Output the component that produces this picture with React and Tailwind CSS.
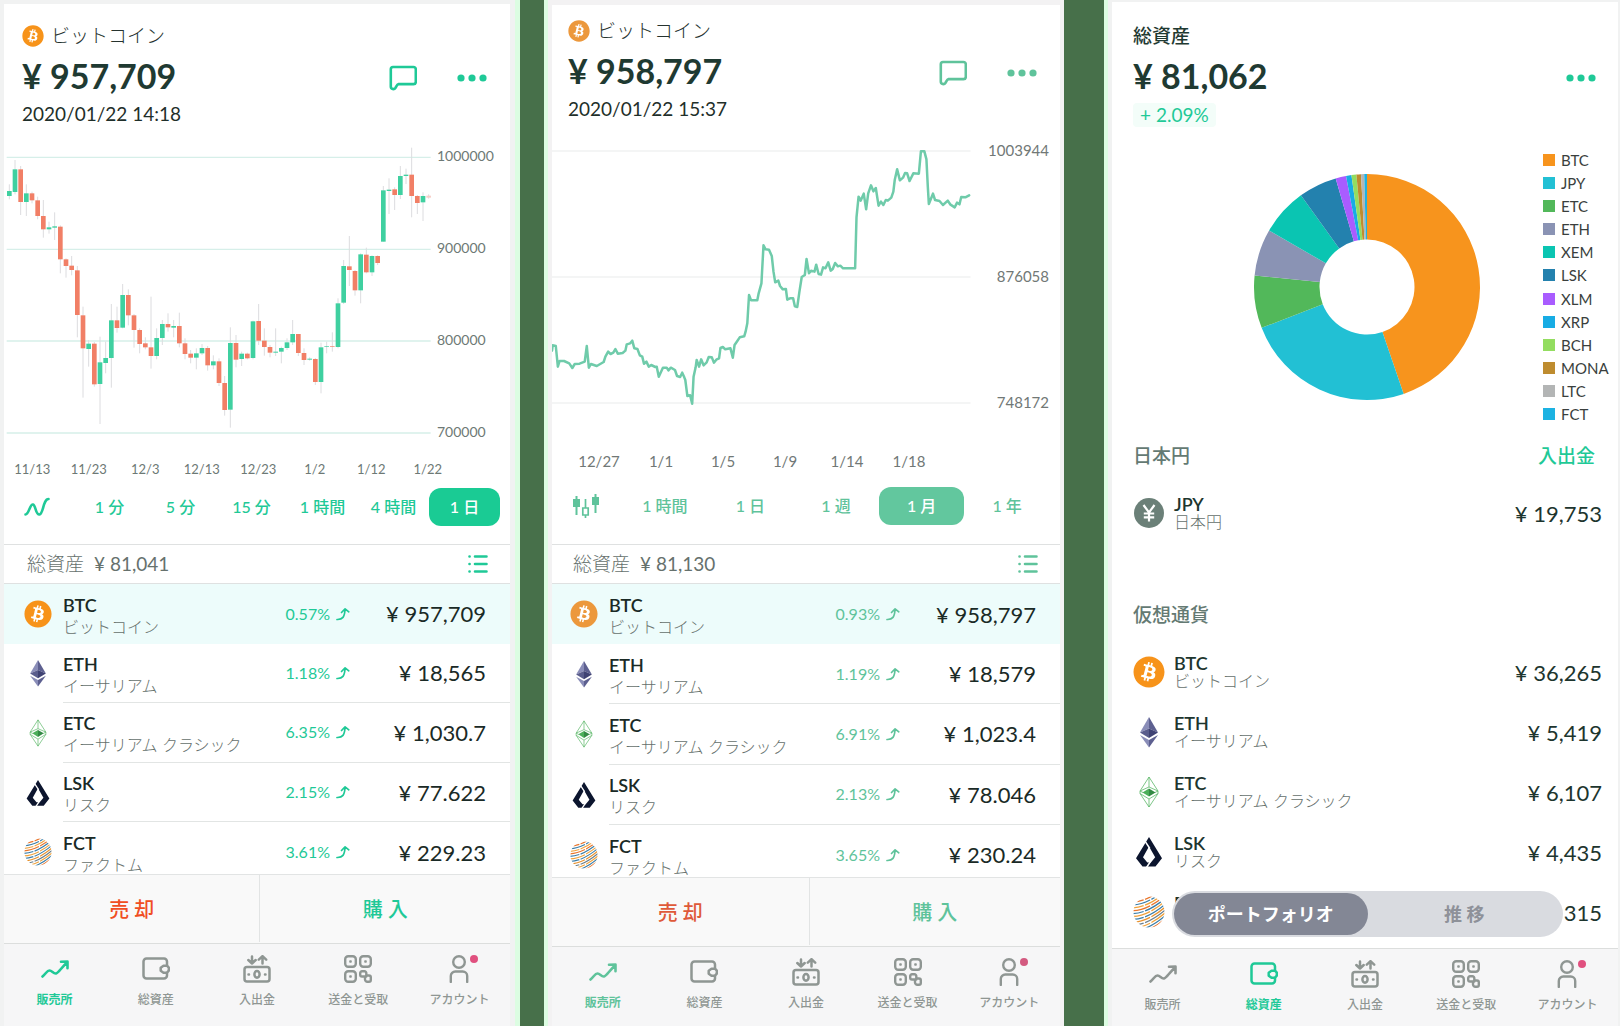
import React from "react";
import { FaBitcoin } from "react-icons/fa";

/* ---------- themes ---------- */

const vivid = {
  text: "text-[#1fc997]",
  fill: "bg-[#1acb94]",
  coin: "text-[#f7931a]",
  sell: "text-[#f04e23]",
  badge: "bg-[#e0507f]",
};
const soft = {
  text: "text-[#5fc39b]",
  fill: "bg-[#62c79e]",
  coin: "text-[#ec983c]",
  sell: "text-[#df5a3a]",
  badge: "bg-[#d35a80]",
};

/* ---------- coin icons ---------- */

function BtcIcon({ theme }) {
  return (
    <span className={"block size-full rounded-full bg-white bg-clip-content p-[2px] " + theme.coin}>
      <FaBitcoin className="-m-[2px] block h-[calc(100%+4px)] w-[calc(100%+4px)]" />
    </span>
  );
}

function EthIcon() {
  return (
    <svg viewBox="0 0 32 32" className="block size-full">
      <path d="M16 1 7 16.600 16 12.500z" fill="#8a8db8" />
      <path d="M16 1v11.500l9 4.100z" fill="#5d6090" />
      <path d="M7 16.600 16 12.500v9.500z" fill="#5a5d8c" />
      <path d="M25 16.600 16 12.500v9.500z" fill="#3f4273" />
      <path d="M7 19l9 5v7.500z" fill="#8a8db8" />
      <path d="M25 19l-9 5v7.500z" fill="#5d6090" />
    </svg>
  );
}

function EtcIcon() {
  return (
    <svg viewBox="0 0 32 32" className="block size-full" fill="none" stroke="#5cb868" strokeWidth=".8" strokeLinejoin="round">
      <path d="M16 1 7 15 16 11l9 4z" />
      <path d="M7 15v2.500L16 31l9-13.500V15" />
      <path d="M16 1v10M7 17.500 16 23l9-5.500M16 23v8M7 15l3 1.500M25 15l-3 1.500" />
      <path d="M16 12.500 9.500 16.400 16 20.500z" fill="#4caf5a" stroke="none" />
      <path d="M16 12.500l6.500 3.900L16 20.500z" fill="#338a44" stroke="none" />
    </svg>
  );
}

function LskIcon() {
  return (
    <svg viewBox="0 0 32 32" className="block size-full">
      <path fill="#0c152e" fillRule="evenodd" d="M16 1l13 21.200-6.500 8.300h-13L3 22.200zM16 10.500l-6 10.800 4.300 5.200h3.600l4.300-5.200z" />
      <path d="M16.800 12.500 12.500 5.800M17.500 25.500l-4 6" stroke="#fff" strokeWidth="1.500" />
    </svg>
  );
}

function FctIcon({ id }) {
  const colors = ["#e8762d", "#3b7ea8", "#f0a23c", "#e8762d", "#3b7ea8", "#f0a23c", "#3b7ea8", "#e8912d", "#6a7f8c", "#f0a23c", "#3b7ea8", "#e8762d"];
  return (
    <svg viewBox="0 0 32 32" className="block size-full">
      <clipPath id={id}>
        <circle cx="16" cy="16" r="15.500" />
      </clipPath>
      <g clipPath={"url(#" + id + ")"} fill="none" strokeWidth="1.300">
        {colors.map((c, i) => (
          <path key={i} stroke={c} strokeDasharray={i % 2 ? "19 1.500 30" : "12 1.500 40"} d={`M-1 ${6 + i * 2.9}C9 ${6 + i * 2.9} 20 ${1 + i * 2.9} 32 ${-9 + i * 2.9}`} />
        ))}
      </g>
    </svg>
  );
}

function JpyIcon() {
  return (
    <svg viewBox="0 0 32 32" className="block size-full">
      <circle cx="16" cy="16" r="15" fill="#6b8078" />
      <path d="M10.500 8 16 15.500 21.500 8M16 15.500V24.500M10.800 16.500h10.400M10.800 20.300h10.400" fill="none" stroke="#fff" strokeWidth="2.200" />
    </svg>
  );
}

function CoinIcon({ code, theme, id }) {
  if (code === "BTC") return <BtcIcon theme={theme} />;
  if (code === "ETH") return <EthIcon />;
  if (code === "ETC") return <EtcIcon />;
  if (code === "LSK") return <LskIcon />;
  if (code === "JPY") return <JpyIcon />;
  return <FctIcon id={id} />;
}

/* ---------- interface icons ---------- */

const stroke = { fill: "none", stroke: "currentColor", strokeLinecap: "round", strokeLinejoin: "round" };

function CommentIcon() {
  return (
    <svg viewBox="0 0 28 26" className="h-[26px] w-7" strokeWidth="2.600" {...stroke}>
      <path d="M4 2h20.500a2.300 2.300 0 0 1 2.300 2.300v12.500a2.300 2.300 0 0 1-2.300 2.300H9.500c-1.600.200-2 2-2.900 3.600-1.400 2.200-4.800 1.700-4.800-1.200V4.300A2.300 2.300 0 0 1 4 2z" />
    </svg>
  );
}

function DotsIcon() {
  return (
    <svg viewBox="0 0 30 8" className="h-2 w-[30px]" fill="currentColor">
      <circle cx="4" cy="4" r="3.600" />
      <circle cx="15" cy="4" r="3.600" />
      <circle cx="26" cy="4" r="3.600" />
    </svg>
  );
}

function ListIcon() {
  return (
    <svg viewBox="0 0 20 20" className="size-5" strokeWidth="2.600" {...stroke}>
      <path d="M7 2.500h11.500M7 10h11.500M7 17.500h11.500M1.500 2.500h.1M1.500 10h.1M1.500 17.500h.1" />
    </svg>
  );
}

function WaveIcon() {
  return (
    <svg viewBox="0 0 26 20" className="h-5 w-[26px]" strokeWidth="2.600" {...stroke}>
      <path d="M1.500 17.500C5 17.500 6 6.500 9 7.500s2.500 10.500 6.500 10S19 2 24.500 2" />
    </svg>
  );
}

function CandleIcon() {
  return (
    <svg viewBox="0 0 28 26" className="h-[26px] w-7" fill="currentColor">
      <path d="M1 6h2.500V3h2v3H8v8H5.500v8h-2v-8H1zM20 4h2.500V1h2v3H27v8h-2.500v8h-2v-8H20z" />
      <path d="M13.500 6v9M13.500 22v3M10.800 15h5.400v7h-5.400z" fill="none" stroke="currentColor" strokeWidth="1.700" />
    </svg>
  );
}

function UpArrow() {
  return (
    <svg viewBox="0 0 14 14" className="h-[14px] w-[14px]" strokeWidth="1.700" {...stroke}>
      <path d="M1 12.500c5.500.3 7.800-2.500 8-10.500M5.500 5.500 9.100 1.800 12.800 4.800" />
    </svg>
  );
}

function MarketIcon() {
  return (
    <svg viewBox="0 0 28 28" className="size-7" strokeWidth="2.600" {...stroke}>
      <path d="M1.500 21.500C5 18.500 6 15.500 8.500 15.500s4 3.600 6.500 3S20 13 26 7.500M20 6.700l6.500-.2v6.800" />
    </svg>
  );
}

function WalletIcon() {
  return (
    <svg viewBox="0 0 28 28" className="size-7" strokeWidth="2.500" {...stroke}>
      <path d="M24.500 10V6.500a3 3 0 0 0-3-3H4a3 3 0 0 0-3 3v14a3 3 0 0 0 3 3h17.500a3 3 0 0 0 3-3V18" transform="translate(.5 0)" />
      <path d="M21.500 10.700H25l1.800 2v3l-1.800 2h-3.500l-2.800-2v-3z" />
    </svg>
  );
}

function CashIcon() {
  return (
    <svg viewBox="0 0 28 28" className="size-7" strokeWidth="2.500" {...stroke}>
      <rect x="1.500" y="12" width="25" height="14.500" rx="2.500" />
      <ellipse cx="14" cy="19.300" rx="2.600" ry="3.400" />
      <path d="M5.500 19.500h.5M22 19.500h.5M9 1.500v7M5.300 5 9 8.500 12.700 5M19.500 8.500v-7M15.800 4.700l3.700-3.500 3.700 3.500" />
    </svg>
  );
}

function QrIcon() {
  return (
    <svg viewBox="0 0 28 28" className="size-7" strokeWidth="2.400" {...stroke}>
      <rect x="1.200" y="1.200" width="10.600" height="10.600" rx="3" />
      <rect x="16.200" y="1.200" width="10.600" height="10.600" rx="3" />
      <rect x="1.200" y="16.200" width="10.600" height="10.600" rx="3" />
      <path d="M18 16.200h2.500a1.800 1.800 0 0 1 1.800 1.800v3.500H18a1.800 1.800 0 0 1-1.800-1.800V18a1.800 1.800 0 0 1 1.800-1.800zM22.300 20.500H25a1.800 1.800 0 0 1 1.800 1.800V25a1.800 1.800 0 0 1-1.800 1.800h-1.500A2.500 2.500 0 0 1 21 24v-2.500" />
      <path d="M6 6h1v1H6zM21 6h1v1h-1zM6 21h1v1H6z" fill="currentColor" strokeWidth="1.600" />
    </svg>
  );
}

function UserIcon() {
  return (
    <svg viewBox="0 0 28 28" className="size-7" strokeWidth="2.400" {...stroke}>
      <circle cx="14" cy="7" r="5.800" />
      <path d="M5.800 27v-6a4.500 4.500 0 0 1 4.500-4.500h7.400a4.500 4.500 0 0 1 4.500 4.500v6" />
    </svg>
  );
}

/* ---------- shared pieces ---------- */

const NAV = [
  ["販売所", MarketIcon],
  ["総資産", WalletIcon],
  ["入出金", CashIcon],
  ["送金と受取", QrIcon],
  ["アカウント", UserIcon],
];

function BottomNav({ active, theme, height }) {
  return (
    <nav className={"grid shrink-0 grid-cols-5 border-t border-[#dcdedd] bg-[#f6f6f7] " + height}>
      {NAV.map(([label, Icon], i) => (
        <a key={label} href="#" className={"flex flex-col items-center gap-[9px] pt-[11px] " + (i === active ? theme.text : "text-[#8f9693]")}>
          <span className="relative">
            <Icon />
            {i === 4 && <span className={"absolute -right-[5px] top-0 size-2 rounded-full " + theme.badge} />}
          </span>
          <span className={"whitespace-nowrap text-xs leading-4 " + (i === active ? "font-bold" : "font-medium")}>{label}</span>
        </a>
      ))}
    </nav>
  );
}

function PriceLine({ price, theme, comment, pad }) {
  return (
    <div className={"mt-1 flex h-11 items-center justify-between " + pad}>
      <div className="text-[34px] font-bold leading-[44px] text-[#1f3a32]">{price}</div>
      <div className={"flex items-center gap-10 pt-[3px] " + theme.text}>
        {comment && (
          <button aria-label="コメント">
            <CommentIcon />
          </button>
        )}
        <button aria-label="メニュー">
          <DotsIcon />
        </button>
      </div>
    </div>
  );
}

function Periods({ items, active, theme, icon, margin }) {
  return (
    <div className={"flex h-[38px] items-stretch pr-[10px] " + margin}>
      <button aria-label="チャート切替" className={"w-[70px] shrink-0 pl-5 " + theme.text}>
        {icon}
      </button>
      {items.map((label) => (
        <button
          key={label}
          className={"flex-1 whitespace-nowrap rounded-xl text-base font-medium " + (label === active ? "text-white " + theme.fill : theme.text)}
        >
          {label}
        </button>
      ))}
    </div>
  );
}

function TotalBar({ value, theme, margin }) {
  return (
    <div className={"flex h-10 shrink-0 items-center justify-between border-y border-[#dfe1e1] pr-[22px] " + margin}>
      <div className="flex gap-[10px] text-[19px] text-[#66716d]">
        <span className="font-light">総資産</span>
        <span>{value}</span>
      </div>
      <button aria-label="一覧" className={theme.text}>
        <ListIcon />
      </button>
    </div>
  );
}

function CoinList({ rows, theme, height, pad, id }) {
  return (
    <div className="min-h-0 flex-1 overflow-hidden">
      <ul className={"grid grid-rows-5 " + height}>
        {rows.map(([code, name, pct, price], i) => (
          <li key={code} className={"flex min-h-0 " + pad + (i === 0 ? " bg-[#edfcfb]" : "")}>
            <button className="flex w-full items-stretch gap-[11px] text-left">
              <span className="size-7 shrink-0 self-center">
                <CoinIcon code={code} theme={theme} id={id + "-sphere"} />
              </span>
              <span className={"flex flex-1 items-center pr-6 " + (i > 0 && i < 4 ? "border-b border-[#e2e5e4]" : "")}>
                <span className="flex-1 whitespace-nowrap pt-1">
                  <span className="block text-lg font-semibold leading-[22px] text-[#1a2a26]">{code}</span>
                  <span className="block text-base font-light leading-[22px] text-[#65706c]">{name}</span>
                </span>
                <span className={"flex items-center gap-1.5 text-base " + theme.text}>
                  {pct}
                  <UpArrow />
                </span>
                <span className="w-[136px] text-right text-[22px] text-[#1a2a26]">{price}</span>
              </span>
            </button>
          </li>
        ))}
      </ul>
    </div>
  );
}

function TradeBar({ theme }) {
  return (
    <div className="grid h-[69px] shrink-0 grid-cols-[257fr_250fr] border-t border-[#e2e4e4] bg-[#f9f9f9] pb-px text-xl font-medium">
      <button className={"border-r border-[#e2e4e4] " + theme.sell}>売 却</button>
      <button className={theme.text}>購 入</button>
    </div>
  );
}

function CoinHeader({ theme, price, time, pad }) {
  return (
    <header className={"pr-[19px] " + pad}>
      <h1 className="flex h-7 items-center gap-[7px] text-[19px] font-light text-[#26332f]">
        <span className="size-[22px]">
          <BtcIcon theme={theme} />
        </span>
        ビットコイン
      </h1>
      <PriceLine price={price} theme={theme} comment pad="pr-1" />
      <div className="mt-1 text-[19px] leading-6 text-[#1f2f2a]">{time}</div>
    </header>
  );
}

/* ---------- charts ---------- */

/* direction, body top, body bottom, wick top, wick bottom */
const CANDLES = [
  ["u", 183, 198, 163, 208], ["u", 118, 186, 90, 193], ["d", 118, 216, 108, 255], ["u", 190, 216, 163, 258],
  ["d", 190, 211, 185, 220], ["d", 211, 258, 200, 268], ["d", 258, 298, 210, 323], ["u", 292, 298, 275, 311],
  ["u", 289, 293, 247, 330], ["d", 290, 388, 286, 430], ["d", 388, 408, 385, 443], ["d", 407, 420, 378, 436],
  ["d", 421, 555, 408, 622], ["d", 556, 655, 530, 803], ["u", 641, 657, 630, 710], ["d", 641, 763, 636, 770],
  ["u", 697, 762, 620, 882], ["u", 684, 699, 635, 730], ["u", 571, 684, 522, 773], ["d", 571, 594, 530, 608],
  ["u", 495, 593, 462, 595], ["d", 495, 556, 478, 586], ["d", 556, 600, 552, 653], ["d", 600, 642, 595, 670],
  ["d", 640, 652, 622, 658], ["d", 652, 678, 500, 716], ["u", 624, 678, 595, 688], ["u", 582, 624, 570, 645],
  ["d", 582, 592, 550, 605], ["u", 588, 593, 570, 622], ["d", 588, 640, 548, 652], ["d", 640, 672, 625, 688],
  ["d", 671, 683, 660, 700], ["u", 670, 683, 655, 718], ["u", 654, 670, 642, 675], ["d", 654, 706, 648, 722],
  ["u", 694, 706, 676, 718], ["d", 694, 759, 685, 768], ["d", 759, 840, 738, 857], ["u", 639, 839, 592, 893],
  ["d", 639, 689, 615, 712], ["u", 671, 687, 665, 708], ["d", 671, 685, 668, 688], ["u", 574, 684, 572, 688],
  ["d", 573, 632, 522, 645], ["d", 632, 651, 595, 677], ["d", 651, 668, 645, 682], ["u", 665, 668, 595, 678],
  ["u", 654, 665, 650, 700], ["u", 637, 654, 625, 660], ["u", 612, 637, 570, 645], ["d", 612, 669, 612, 678],
  ["d", 669, 690, 655, 705], ["u", 686, 689, 682, 692], ["d", 687, 756, 684, 765], ["u", 652, 756, 638, 790],
  ["u", 649, 651, 635, 670], ["d", 649, 651, 607, 665], ["u", 520, 651, 505, 655], ["u", 408, 518, 390, 522],
  ["d", 409, 420, 318, 468], ["d", 423, 481, 420, 497], ["u", 373, 481, 370, 520], ["d", 374, 427, 353, 430],
  ["u", 378, 427, 376, 438], ["d", 378, 399, 376, 405], ["u", 181, 335, 168, 335], ["u", 179, 183, 145, 252],
  ["d", 178, 195, 172, 240], ["u", 138, 195, 108, 207], ["u", 134, 138, 116, 162], ["d", 134, 198, 53, 262],
  ["d", 198, 219, 195, 252], ["u", 198, 217, 187, 273], ["f", 197, 203, 193, 206],
];
const CANDLE_FILL = { u: "#3fd0a0", d: "#f17f66", f: "#f7cfc8" };

function CandleChart() {
  return (
    <div className="mt-[14px] flex">
      <svg viewBox="12 30 1284 912" preserveAspectRatio="none" className="h-[304px] min-w-0 flex-1">
        {[82, 358, 633, 909].map((y) => (
          <path key={y} d={`M20 ${y}H1292`} stroke="#d6efe9" strokeWidth="4" />
        ))}
        {CANDLES.map(([dir, top, bottom, hi, lo], i) => (
          <g key={i}>
            <path d={`M${28 + 17 * i} ${hi}V${lo}`} stroke="#dcdcdf" strokeWidth="3" />
            <rect x={21 + 17 * i} y={top} width="14" height={bottom - top} fill={CANDLE_FILL[dir]} />
          </g>
        ))}
      </svg>
      <div className="flex w-[78px] shrink-0 flex-col gap-[72px] pl-[5px] pt-[6px] text-sm leading-5 text-[#6d7975]">
        <span>1000000</span>
        <span>900000</span>
        <span>800000</span>
        <span>700000</span>
      </div>
    </div>
  );
}

const LINE_POINTS =
  "35,662 37,646 46,648 52,710 57,693 70,693 85,700 94,714 101,702 115,701 130,695 136,648 142,713 148,702 165,708 185,696 190,680 198,665 205,672 213,668 219,657 226,671 240,669 248,662 252,643 262,640 268,632 274,655 283,657 290,676 297,680 302,701 309,695 316,710 323,705 335,711 339,710 345,740 357,713 368,713 373,721 380,713 392,720 398,738 407,741 413,728 419,742 422,750 428,798 436,796 442,821 446,740 452,712 455,690 462,710 468,688 475,706 484,697 490,681 499,682 505,698 512,689 520,685 524,654 531,651 538,658 553,655 560,683 565,645 573,633 580,622 593,619 597,605 602,580 607,495 613,511 631,511 635,490 643,460 649,346 655,358 665,359 673,378 678,425 683,457 692,452 697,468 705,478 714,477 718,509 726,505 735,505 740,529 747,531 753,487 760,441 769,435 774,387 781,430 787,422 797,425 802,404 809,432 816,434 822,412 829,415 837,397 844,422 850,417 857,399 865,409 872,407 880,415 915,415 919,262 925,200 931,212 940,191 947,238 953,190 961,166 968,184 975,174 983,227 990,215 997,225 1004,210 1010,212 1020,203 1026,185 1030,150 1037,118 1045,151 1054,143 1060,129 1066,130 1073,153 1084,130 1100,131 1106,64 1116,64 1122,88 1126,170 1129,222 1141,191 1147,210 1160,213 1170,225 1184,212 1192,224 1204,232 1211,218 1218,223 1223,201 1235,202 1246,196";

function LineChart() {
  return (
    <div className="mt-[19px] flex">
      <svg viewBox="35 30 1228 840" preserveAspectRatio="none" className="h-[280px] min-w-0 flex-1">
        {[63, 441, 819].map((y) => (
          <path key={y} d={`M35 ${y}H1250`} stroke="#f1f2f2" strokeWidth="4" />
        ))}
        <polyline points={LINE_POINTS} fill="none" stroke="#6fcbaa" strokeWidth="2.500" strokeLinejoin="round" strokeLinecap="round" vectorEffect="non-scaling-stroke" />
      </svg>
      <div className="flex w-[85px] shrink-0 flex-col gap-[106px] pr-[11px] text-right text-[15px] leading-5 text-[#717876]">
        <span>1003944</span>
        <span>876058</span>
        <span>748172</span>
      </div>
    </div>
  );
}

const HOLDINGS = [
  ["BTC", 44.74, "#f7941d"],
  ["JPY", 24.37, "#22c0d4"],
  ["ETC", 7.53, "#52b85a"],
  ["ETH", 6.68, "#8a93b4"],
  ["XEM", 6.74, "#0ac5b2"],
  ["LSK", 5.47, "#2381ae"],
  ["XLM", 1.5, "#a95cff"],
  ["XRP", 0.77, "#17ace4"],
  ["BCH", 0.7, "#93dd60"],
  ["MONA", 0.65, "#be8c2f"],
  ["LTC", 0.46, "#b3b5b5"],
  ["FCT", 0.39, "#1cb2e2"],
];

function Donut() {
  const total = HOLDINGS.reduce((sum, h) => sum + h[1], 0);
  let acc = 0;
  const point = (share, r) => {
    const a = (share / total) * 2 * Math.PI;
    return `${Math.sin(a) * r} ${-Math.cos(a) * r}`;
  };
  return (
    <svg viewBox="-114 -114 228 228" className="size-[228px]" role="img" aria-label="ポートフォリオ">
      {HOLDINGS.map(([code, share, color]) => {
        const from = acc;
        acc += share;
        return <path key={code} fill={color} d={`M${point(from, 113)}A113 113 0 0 1 ${point(acc, 113)}L${point(acc, 47.5)}A47.5 47.5 0 0 0 ${point(from, 47.5)}Z`} />;
      })}
    </svg>
  );
}

/* ---------- screens ---------- */

function CandleScreen() {
  return (
    <section className="flex min-h-0 min-w-0 flex-col border-r-[5px] border-[#dcfde2]">
      <div className="flex min-h-0 flex-1 flex-col border-l-4 border-r-[5px] border-t-4 border-[#f1f2f2] bg-white">
        <CoinHeader theme={vivid} price="¥ 957,709" time="2020/01/22 14:18" pad="pl-[18px] pt-[18px]" />
        <CandleChart />
        <div className="mr-[54px] mt-[15px] grid grid-cols-8 text-center text-[13px] leading-5 text-[#6d7975]">
          {["11/13", "11/23", "12/3", "12/13", "12/23", "1/2", "1/12", "1/22"].map((d) => (
            <span key={d}>{d}</span>
          ))}
        </div>
        <Periods items={["1 分", "5 分", "15 分", "1 時間", "4 時間", "1 日"]} active="1 日" theme={vivid} icon={<WaveIcon />} margin="mt-[9px]" />
        <TotalBar value="¥ 81,041" theme={vivid} margin="mt-[18px] pl-[23px]" />
        <CoinList
          id="candle"
          theme={vivid}
          height="h-[298px]"
          pad="pl-5"
          rows={[
            ["BTC", "ビットコイン", "0.57%", "¥ 957,709"],
            ["ETH", "イーサリアム", "1.18%", "¥ 18,565"],
            ["ETC", "イーサリアム クラシック", "6.35%", "¥ 1,030.7"],
            ["LSK", "リスク", "2.15%", "¥ 77.622"],
            ["FCT", "ファクトム", "3.61%", "¥ 229.23"],
          ]}
        />
        <TradeBar theme={vivid} />
        <BottomNav active={0} theme={vivid} height="h-[83px]" />
      </div>
    </section>
  );
}

function LineScreen() {
  return (
    <section className="flex min-h-0 min-w-0 flex-col border-l-4 border-[#dcfde2]">
      <div className="flex min-h-0 flex-1 flex-col border-x-4 border-t-[5px] border-[#f3f2f3] bg-white">
        <CoinHeader theme={soft} price="¥ 958,797" time="2020/01/22 15:37" pad="pl-4 pt-3" />
        <LineChart />
        <div className="ml-4 mr-[120px] mt-[31px] grid grid-cols-6 text-center text-[15px] leading-5 text-[#717876]">
          {["12/27", "1/1", "1/5", "1/9", "1/14", "1/18"].map((d) => (
            <span key={d}>{d}</span>
          ))}
        </div>
        <Periods items={["1 時間", "1 日", "1 週", "1 月", "1 年"]} active="1 月" theme={soft} icon={<CandleIcon />} margin="mt-4" />
        <TotalBar value="¥ 81,130" theme={soft} margin="mt-[19px] pl-[21px]" />
        <CoinList
          id="line"
          theme={soft}
          height="h-[301px]"
          pad="pl-[18px]"
          rows={[
            ["BTC", "ビットコイン", "0.93%", "¥ 958,797"],
            ["ETH", "イーサリアム", "1.19%", "¥ 18,579"],
            ["ETC", "イーサリアム クラシック", "6.91%", "¥ 1,023.4"],
            ["LSK", "リスク", "2.13%", "¥ 78.046"],
            ["FCT", "ファクトム", "3.65%", "¥ 230.24"],
          ]}
        />
        <TradeBar theme={soft} />
        <BottomNav active={0} theme={soft} height="h-[80px]" />
      </div>
    </section>
  );
}

function AssetRow({ code, name, price }) {
  return (
    <li className="flex h-[60px] items-center gap-[9px] pl-[21px] pr-4">
      <span className="size-8 shrink-0">
        <CoinIcon code={code} theme={vivid} id="asset-sphere" />
      </span>
      <span className="flex-1">
        <span className="block text-lg font-semibold leading-[18px] text-[#1d352e]">{code}</span>
        <span className="block text-base font-light leading-[18px] text-[#65706c]">{name}</span>
      </span>
      <span className="text-[22px] text-[#1d352e]">{price}</span>
    </li>
  );
}

function AssetScreen() {
  return (
    <section className="flex min-h-0 min-w-0 flex-col border-l-4 border-[#dcfde2]">
      <div className="flex min-h-0 flex-1 flex-col border-l-4 border-r-2 border-t-2 border-[#f1f2f2] bg-white">
        <div className="relative min-h-0 flex-1 overflow-hidden">
          <header className="pl-[21px] pt-5">
            <h1 className="flex h-7 items-center text-[19px] font-medium text-[#1f3a32]">総資産</h1>
            <PriceLine price="¥ 81,062" theme={vivid} pad="pr-[22px]" />
            <div className={"mt-[5px] w-fit rounded-sm bg-[#f3fdf9] px-[7px] text-[19px] leading-6 " + vivid.text}>+ 2.09%</div>
          </header>
          <div className="mt-[21px] grid grid-cols-[1fr_auto_1fr] items-center pl-[3px]">
            <span />
            <Donut />
            <ul className="mr-[9px] grid h-[278px] w-[66px] grid-rows-12 justify-self-end">
              {HOLDINGS.map(([code, , color]) => (
                <li key={code} className="flex min-h-0 items-center gap-[6px] text-[15px] leading-5 text-[#3a3f3d]">
                  <svg viewBox="0 0 12 12" className="size-3 shrink-0">
                    <rect width="12" height="12" fill={color} />
                  </svg>
                  {code}
                </li>
              ))}
            </ul>
          </div>
          <div className="mt-4 flex h-7 items-center justify-between pl-[21px] pr-[23px] text-[19px] font-medium">
            <h2 className="text-[#647a73]">日本円</h2>
            <a href="#" className={vivid.text}>
              入出金
            </a>
          </div>
          <ul className="mt-[13px]">
            <AssetRow code="JPY" name="日本円" price="¥ 19,753" />
          </ul>
          <h2 className="mt-[58px] flex h-7 items-center pl-[21px] text-[19px] font-medium text-[#647a73]">仮想通貨</h2>
          <ul className="mt-[13px]">
            <AssetRow code="BTC" name="ビットコイン" price="¥ 36,265" />
            <AssetRow code="ETH" name="イーサリアム" price="¥ 5,419" />
            <AssetRow code="ETC" name="イーサリアム クラシック" price="¥ 6,107" />
            <AssetRow code="LSK" name="リスク" price="¥ 4,435" />
            <AssetRow code="FCT" name="ファクトム" price="¥ 315" />
          </ul>
          <div className="absolute bottom-[11px] left-[60px] right-[55px] flex h-[46px] rounded-full bg-[#d9dbe0] p-[2px] text-lg font-bold">
            <button className="flex-1 rounded-full bg-[#838795] text-white" aria-pressed="true">
              ポートフォリオ
            </button>
            <button className="flex-1 text-[#8e9199]" aria-pressed="false">
              推 移
            </button>
          </div>
        </div>
        <BottomNav active={1} theme={vivid} height="h-[78px]" />
      </div>
    </section>
  );
}

export default function App() {
  return (
    <main className="grid h-screen grid-cols-[520fr_24px_520fr_40px_516fr] grid-rows-1 overflow-hidden bg-[#47704a] font-['Lato','Noto_Sans_CJK_JP',sans-serif]">
      <CandleScreen />
      <div />
      <LineScreen />
      <div />
      <AssetScreen />
    </main>
  );
}
